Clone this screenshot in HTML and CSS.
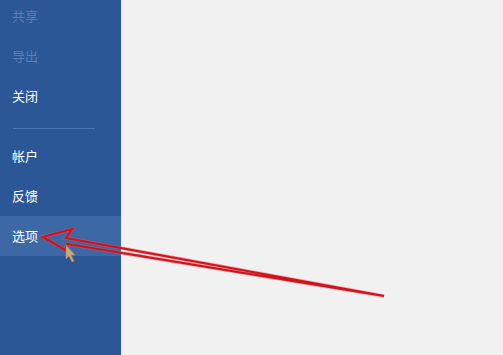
FILE: index.html
```html
<!DOCTYPE html>
<html lang="zh-CN">
<head>
    <meta charset="UTF-8">
    <title>选项</title>
    <link rel="stylesheet" href="styles.css">
</head>
<body>

<div class="backstage">
    <nav class="side-menu">
        <div class="menu-item disabled">共享</div>
        <div class="menu-item disabled">导出</div>
        <div class="menu-item">关闭</div>
        <div class="menu-sep"></div>
        <div class="menu-item">帐户</div>
        <div class="menu-item">反馈</div>
        <div class="menu-item active">选项</div>
    </nav>
    <div class="main-area"></div>
</div>

<!-- 标注箭头 + 鼠标指针 -->
<svg class="overlay" width="503" height="355" viewBox="0 0 503 355">
    <polygon points="43,237 72,229 66,238 384,296 67,244 65,250" fill="none" stroke="#e8565b" stroke-width="3.4" stroke-linejoin="miter" opacity="0.5"/>
    <polygon points="43,237 72,229 66,238 384,296 67,244 65,250" fill="none" stroke="#d0121a" stroke-width="2.2" stroke-linejoin="miter"/>
    <polygon points="66,245 66,259 69,256 72,262 74,261 71,255 75,255" fill="#c9a87c" stroke="#a88658" stroke-width="0.6"/>
</svg>

</body>
</html>
```

FILE: styles.css
```css
body {
    margin: 0;
    padding: 0;
    width: 503px;
    height: 355px;
    overflow: hidden;
    position: relative;
    background-color: #f1f1f1;
    font-family: "Noto Sans CJK SC", "Noto Sans", sans-serif;
}

.backstage {
    display: flex;
    height: 355px;
}

.side-menu {
    width: 121px;
    flex-shrink: 0;
    background-color: #2b5797;
    display: flex;
    flex-direction: column;
    margin-top: -4px;
}

.menu-item {
    height: 40px;
    line-height: 40px;
    padding-left: 12px;
    font-size: 13px;
    color: #ffffff;
}

.menu-item.disabled {
    color: #5c80b6;
}

.menu-item.active {
    background-color: #3d68a6;
}

.menu-sep {
    height: 1px;
    margin: 12px 26px 7px 13px;
    background-color: #4b73ad;
}

.main-area {
    flex: 1;
    background-color: #f1f1f1;
}

.overlay {
    position: absolute;
    top: 0;
    left: 0;
}
```
